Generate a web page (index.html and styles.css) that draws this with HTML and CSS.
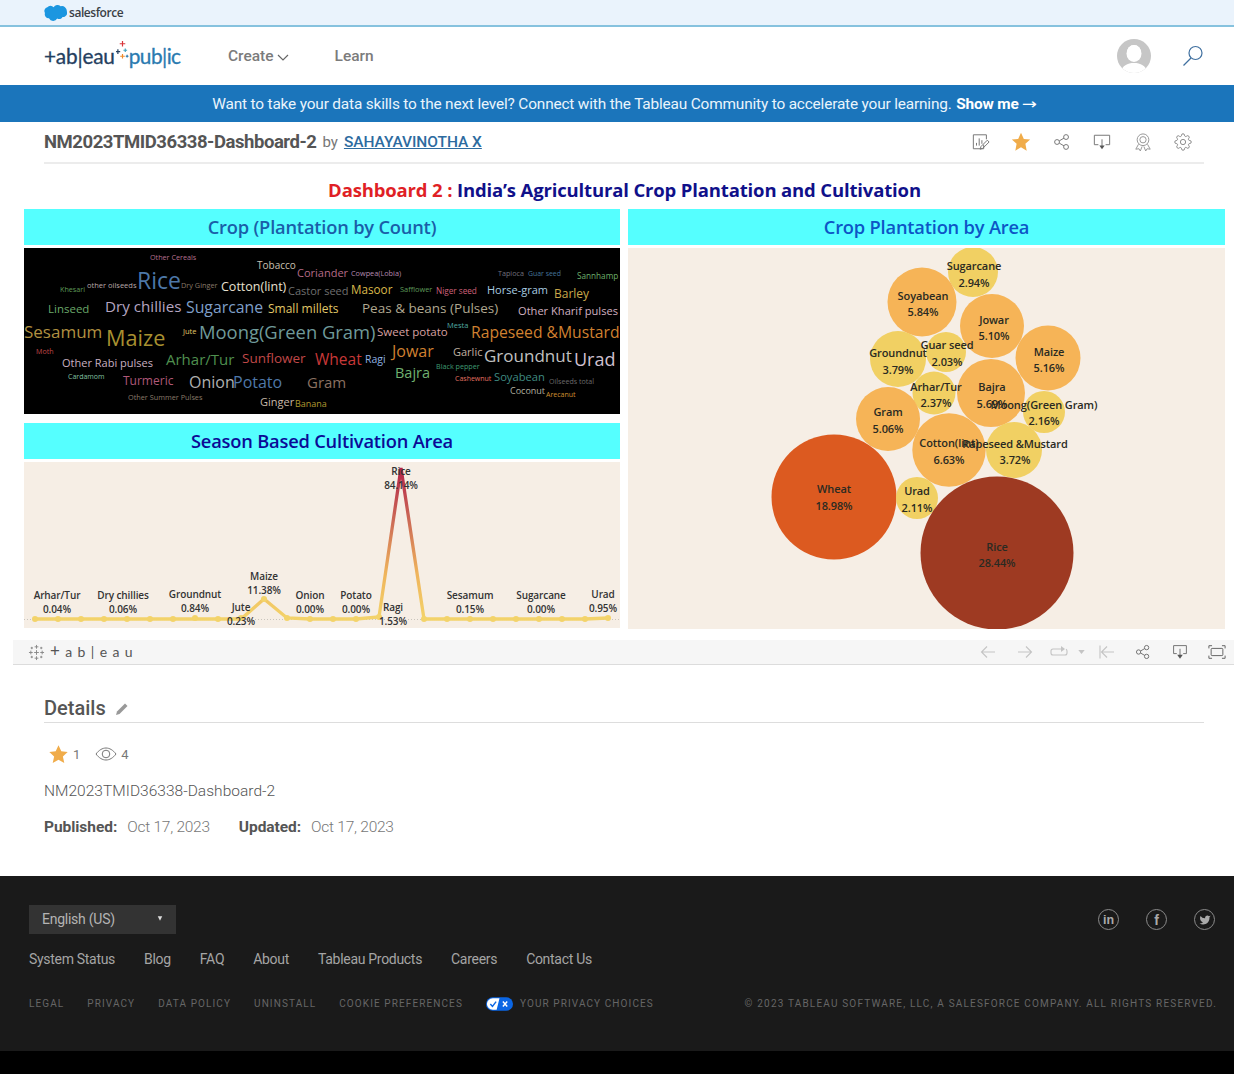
FILE: index.html
```html
<!DOCTYPE html>
<html lang="en">
<head>
<meta charset="utf-8">
<title>NM2023TMID36338-Dashboard-2</title>
<link rel="stylesheet" href="styles.css">
</head>
<body>
<div class="sf-bar">
  <svg class="sf-cloud" viewBox="0 0 24 17"><path d="M10 3a4.6 4.6 0 0 1 7.3-.9 5 5 0 0 1 6.500 5.100 4.300 4.300 0 0 1-4.400 6 4 4 0 0 1-5.600 1.600 4.800 4.800 0 0 1-8.600-.3A4.200 4.200 0 0 1 1 9a4 4 0 0 1 2.500-6A4 4 0 0 1 10 3z"/></svg>
  <span class="sf-name">salesforce</span>
</div>
<header class="nav">
  <div class="logo">
    <span class="logo-dark">+ab|eau</span>
    <svg class="logo-spark" viewBox="0 0 14 26"><path class="sp-red" d="M7 0v6M4 3h6"/><path class="sp-navy" d="M2 9v5M0 11.500h4.500"/><path class="sp-teal" d="M10 8v4M8 10h4"/><path class="sp-orange" d="M7 14v5M4.500 16.500h5"/><path class="sp-blue" d="M12 15v3M10.500 16.500h3"/></svg>
    <span class="logo-blue">pub|ic</span>
  </div>
  <nav class="nav-links">
    <a class="nav-link">Create <svg class="chev" viewBox="0 0 12 7"><path d="M1 1l5 5 5-5"/></svg></a>
    <a class="nav-link">Learn</a>
  </nav>
  <svg class="avatar" viewBox="0 0 34 34"><defs><clipPath id="avc"><circle cx="17" cy="17" r="17"/></clipPath></defs><circle cx="17" cy="17" r="17" fill="#c6c6c6"/><g clip-path="url(#avc)" fill="#fff"><ellipse cx="17" cy="14.500" rx="7.500" ry="8.500"/><path d="M3 36c1-9 7-12 14-12s13 3 14 12z"/></g><ellipse cx="17" cy="14" rx="7" ry="8" fill="#fff"/></svg>
  <svg class="search" viewBox="0 0 22 22"><circle cx="13.500" cy="8" r="6.500"/><path d="M9 13L1.500 20.500"/></svg>
</header>
<div class="banner">Want to take your data skills to the next level? Connect with the Tableau Community to accelerate your learning. <b class="banner-b">Show me <span class="banner-arrow">→</span></b></div>
<div class="title-row">
  <h1 class="viz-title">NM2023TMID36338-Dashboard-2</h1>
  <span class="by">by</span>
  <a class="author">SAHAYAVINOTHA X</a>
  <div class="actions">
    <svg class="act" viewBox="0 0 20 20"><path d="M13 13v4.500H1.500V2H16v5"/><path d="M5 14v-3M8 14V6M11 12V8"/><path d="M9 18l1-3 7-7 2 2-7 7z"/></svg>
    <svg class="act star" viewBox="0 0 24 24"><polygon points="12 2 15.100 8.600 22 9.300 16.800 14 18.200 21.500 12 17.600 5.800 21.500 7.200 14 2 9.300 8.900 8.600"/></svg>
    <svg class="act" viewBox="0 0 20 20"><circle cx="4.500" cy="10" r="2.700"/><circle cx="14.500" cy="4.500" r="2.700"/><circle cx="14.500" cy="15.500" r="2.700"/><path d="M7 8.700l5.200-3M7 11.300l5.200 3"/></svg>
    <svg class="act" viewBox="0 0 20 20"><path d="M6 13H1.500V2.500h17V13H14"/><path d="M10 7v9"/><path class="fill" d="M7 14h6l-3 4z"/></svg>
    <svg class="act act-light" viewBox="0 0 20 20"><circle cx="10" cy="7.500" r="6.500"/><circle cx="10" cy="7.500" r="3.500"/><path d="M5 12.500L2 18l3.500-.5L7 20l2-5M15 12.500l3 5.500-3.500-.5L13 20l-2-5"/></svg>
    <svg class="act" viewBox="0 0 24 24"><circle cx="12" cy="12" r="3.500"/><path d="M19.400 15a1.650 1.650 0 0 0 .33 1.820l.06.06a2 2 0 0 1 0 2.830 2 2 0 0 1-2.830 0l-.06-.06a1.650 1.650 0 0 0-1.820-.33 1.650 1.650 0 0 0-1 1.510V21a2 2 0 0 1-2 2 2 2 0 0 1-2-2v-.09A1.650 1.650 0 0 0 9 19.400a1.650 1.650 0 0 0-1.820.33l-.06.06a2 2 0 0 1-2.830 0 2 2 0 0 1 0-2.830l.06-.06a1.650 1.650 0 0 0 .33-1.820 1.650 1.650 0 0 0-1.510-1H3a2 2 0 0 1-2-2 2 2 0 0 1 2-2h.09A1.650 1.650 0 0 0 4.600 9a1.650 1.650 0 0 0-.33-1.820l-.06-.06a2 2 0 0 1 0-2.830 2 2 0 0 1 2.830 0l.06.06a1.650 1.650 0 0 0 1.820.33H9a1.650 1.650 0 0 0 1-1.510V3a2 2 0 0 1 2-2 2 2 0 0 1 2 2v.09a1.650 1.650 0 0 0 1 1.510 1.650 1.650 0 0 0 1.820-.33l.06-.06a2 2 0 0 1 2.830 0 2 2 0 0 1 0 2.830l-.06.06a1.650 1.650 0 0 0-.33 1.820V9a1.650 1.650 0 0 0 1.510 1H21a2 2 0 0 1 2 2 2 2 0 0 1-2 2h-.09a1.650 1.650 0 0 0-1.510 1z"/></svg>
  </div>
</div>
<main class="dash">
  <h2 class="dash-title"><span class="dash-red">Dashboard 2 :</span> India’s Agricultural Crop Plantation and Cultivation</h2>
  <div class="dash-grid">
    <div class="dash-col">
      <div class="panel-head head-a">Crop (Plantation by Count)</div>
      <svg class="cloud" viewBox="24 248 596 166">
        <rect x="24" y="248" width="596" height="166" fill="#000"/>
        <text x="150" y="260" font-size="7.200" fill="#b5708f">Other Cereals</text>
        <text x="257" y="269" font-size="10" fill="#c9c0b0">Tobacco</text>
        <text x="297" y="277" font-size="11" fill="#b56a86">Coriander</text>
        <text x="351" y="276" font-size="7.300" fill="#b58ab0">Cowpea(Lobia)</text>
        <text x="498" y="276" font-size="7.200" fill="#70707c">Tapioca</text>
        <text x="528" y="276" font-size="6.900" fill="#44749a">Guar seed</text>
        <text x="577" y="279" font-size="8.200" fill="#6db06a">Sannhamp</text>
        <text x="60" y="292" font-size="7.200" fill="#5e9a58">Khesari</text>
        <text x="87" y="288" font-size="7.500" fill="#b9a8a8">other oilseeds</text>
        <text x="137" y="289" font-size="23" fill="#4d78a8">Rice</text>
        <text x="181" y="288" font-size="7.300" fill="#8a7a6a">Dry Ginger</text>
        <text x="221" y="291" font-size="12.500" fill="#e8e0d0">Cotton(lint)</text>
        <text x="288" y="295" font-size="11" fill="#6f6f6f">Castor seed</text>
        <text x="351" y="294" font-size="11.700" fill="#d9b84a">Masoor</text>
        <text x="400" y="292" font-size="7.400" fill="#5e9a58">Safflower</text>
        <text x="436" y="294" font-size="8.200" fill="#d0607a">Niger seed</text>
        <text x="487" y="294" font-size="11" fill="#a8cce0">Horse-gram</text>
        <text x="554" y="298" font-size="12" fill="#c9a84a">Barley</text>
        <text x="48" y="313" font-size="11.500" fill="#6aa86a">Linseed</text>
        <text x="105" y="312" font-size="15.200" fill="#b5a5c0">Dry chillies</text>
        <text x="186" y="313" font-size="15.800" fill="#7f9fc8">Sugarcane</text>
        <text x="268" y="313" font-size="12" fill="#e0c868">Small millets</text>
        <text x="362" y="313" font-size="13.500" fill="#b0a890">Peas &amp; beans (Pulses)</text>
        <text x="518" y="315" font-size="11.100" fill="#d0b0c0">Other Kharif pulses</text>
        <text x="24" y="338" font-size="17" fill="#b09040">Sesamum</text>
        <text x="106" y="346" font-size="21.700" fill="#a89030">Maize</text>
        <text x="183" y="334" font-size="7.500" fill="#e0c868">Jute</text>
        <text x="199" y="339" font-size="18.400" fill="#6f9a9a">Moong(Green Gram)</text>
        <text x="377" y="336" font-size="11.500" fill="#d8a0a0">Sweet potato</text>
        <text x="447" y="328" font-size="7.500" fill="#4fa8a0">Mesta</text>
        <text x="471" y="338" font-size="15.700" fill="#d08030">Rapeseed &amp;Mustard</text>
        <text x="36" y="354" font-size="7.100" fill="#c04848">Moth</text>
        <text x="62" y="367" font-size="11" fill="#c8b0c0">Other Rabi pulses</text>
        <text x="166" y="365" font-size="15" fill="#4f8f4f">Arhar/Tur</text>
        <text x="242" y="363" font-size="13.500" fill="#c04848">Sunflower</text>
        <text x="315" y="365" font-size="15.500" fill="#c83838">Wheat</text>
        <text x="365" y="363" font-size="10.500" fill="#8fb0e0">Ragi</text>
        <text x="392" y="357" font-size="16" fill="#d08030">Jowar</text>
        <text x="453" y="356" font-size="11" fill="#c0b0a0">Garlic</text>
        <text x="484" y="362" font-size="17" fill="#c0c0c0">Groundnut</text>
        <text x="574" y="366" font-size="18" fill="#d0c0d0">Urad</text>
        <text x="68" y="379" font-size="7" fill="#80c0a0">Cardamom</text>
        <text x="123" y="385" font-size="12" fill="#b05878">Turmeric</text>
        <text x="189" y="388" font-size="16" fill="#b0b0b0">Onion</text>
        <text x="233" y="388" font-size="16" fill="#4f78a8">Potato</text>
        <text x="307" y="388" font-size="15" fill="#8a7060">Gram</text>
        <text x="395" y="378" font-size="14.500" fill="#6fb06f">Bajra</text>
        <text x="436" y="369" font-size="7.200" fill="#3f9a70">Black pepper</text>
        <text x="455" y="381" font-size="7" fill="#e07060">Cashewnut</text>
        <text x="494" y="381" font-size="11.200" fill="#3f8a80">Soyabean</text>
        <text x="549" y="384" font-size="7.100" fill="#6a6a6a">Oilseeds total</text>
        <text x="510" y="394" font-size="9" fill="#b0b0a0">Coconut</text>
        <text x="546" y="397" font-size="7" fill="#d09030">Arecanut</text>
        <text x="128" y="400" font-size="7.300" fill="#8a7a6a">Other Summer Pulses</text>
        <text x="260" y="406" font-size="11" fill="#c8b8a8">Ginger</text>
        <text x="295" y="407" font-size="9" fill="#b09a30">Banana</text>
      </svg>
      <div class="panel-head head-b">Season Based Cultivation Area</div>
      <svg class="line" viewBox="24 462 596 166">
        <defs><linearGradient id="lg" gradientUnits="userSpaceOnUse" x1="0" y1="619" x2="0" y2="468"><stop offset="0" stop-color="#f3d36a"/><stop offset=".3" stop-color="#efb45c"/><stop offset=".65" stop-color="#cc6a55"/><stop offset="1" stop-color="#b3234a"/></linearGradient></defs>
        <path class="zero" d="M24 619.500H620"/>
        <path class="trend" d="M35 619H218L241 619L264 599L287 618L310 619H356L379 617L401 468L424 619H585L608 618"/>
        <g class="pts">
          <circle cx="35" cy="619" r="3"/><circle cx="58" cy="619" r="3"/><circle cx="81" cy="619" r="3"/><circle cx="104" cy="619" r="3"/><circle cx="127" cy="619" r="3"/><circle cx="150" cy="619" r="3"/><circle cx="173" cy="619" r="3"/><circle cx="195" cy="618" r="3"/><circle cx="218" cy="619" r="3"/><circle cx="241" cy="618" r="3"/><circle cx="264" cy="599" r="3"/><circle cx="287" cy="618" r="3"/><circle cx="310" cy="619" r="3"/><circle cx="333" cy="619" r="3"/><circle cx="356" cy="619" r="3"/><circle cx="379" cy="617" r="3"/><circle cx="424" cy="619" r="3"/><circle cx="447" cy="619" r="3"/><circle cx="470" cy="619" r="3"/><circle cx="493" cy="619" r="3"/><circle cx="516" cy="619" r="3"/><circle cx="539" cy="619" r="3"/><circle cx="562" cy="619" r="3"/><circle cx="585" cy="619" r="3"/><circle cx="608" cy="618" r="3"/>
        </g>
        <g class="labels">
          <text x="57" y="599">Arhar/Tur</text><text x="57" y="613">0.04%</text>
          <text x="123" y="599">Dry chillies</text><text x="123" y="613">0.06%</text>
          <text x="195" y="598">Groundnut</text><text x="195" y="612">0.84%</text>
          <text x="264" y="580">Maize</text><text x="264" y="594">11.38%</text>
          <text x="241" y="611">Jute</text><text x="241" y="625">0.23%</text>
          <text x="310" y="599">Onion</text><text x="310" y="613">0.00%</text>
          <text x="356" y="599">Potato</text><text x="356" y="613">0.00%</text>
          <text x="393" y="611">Ragi</text><text x="393" y="625">1.53%</text>
          <text x="401" y="475">Rice</text><text x="401" y="489">84.14%</text>
          <text x="470" y="599">Sesamum</text><text x="470" y="613">0.15%</text>
          <text x="541" y="599">Sugarcane</text><text x="541" y="613">0.00%</text>
          <text x="603" y="598">Urad</text><text x="603" y="612">0.95%</text>
        </g>
      </svg>
    </div>
    <div class="dash-col dash-col-r">
      <div class="panel-head head-a2">Crop Plantation by Area</div>
      <svg class="bubbles" viewBox="628 248 597 381">
        <rect x="628" y="248" width="597" height="381" fill="#f6eee5"/>
        <circle cx="973" cy="272" r="25" fill="#f1d063"/>
        <circle cx="922" cy="302" r="34.500" fill="#f6b457"/>
        <circle cx="992" cy="326" r="32" fill="#f6b457"/>
        <circle cx="1048" cy="358" r="32.500" fill="#f6b457"/>
        <circle cx="898" cy="359" r="28" fill="#f1d063"/>
        <circle cx="946" cy="352" r="20" fill="#f1d063"/>
        <circle cx="934" cy="393" r="21.500" fill="#f1d063"/>
        <circle cx="991" cy="393" r="34" fill="#f6b457"/>
        <circle cx="1044" cy="412" r="21" fill="#f1d063"/>
        <circle cx="888" cy="419" r="32" fill="#f6b457"/>
        <circle cx="949" cy="450" r="36.700" fill="#f6b457"/>
        <circle cx="1014" cy="450" r="28" fill="#f1d063"/>
        <circle cx="834" cy="497" r="62.500" fill="#dc5a20"/>
        <circle cx="917" cy="498" r="21" fill="#f1d063"/>
        <circle cx="997" cy="553" r="76.500" fill="#9e3a22"/>
        <g class="blabels">
          <text x="974" y="270">Sugarcane</text><text x="974" y="287">2.94%</text>
          <text x="923" y="300">Soyabean</text><text x="923" y="316">5.84%</text>
          <text x="994" y="324">Jowar</text><text x="994" y="340">5.10%</text>
          <text x="1049" y="356">Maize</text><text x="1049" y="372">5.16%</text>
          <text x="898" y="357">Groundnut</text><text x="898" y="374">3.79%</text>
          <text x="947" y="349">Guar seed</text><text x="947" y="366">2.03%</text>
          <text x="936" y="391">Arhar/Tur</text><text x="936" y="407">2.37%</text>
          <text x="992" y="391">Bajra</text><text x="992" y="408">5.69%</text>
          <text x="1044" y="409">Moong(Green Gram)</text><text x="1044" y="425">2.16%</text>
          <text x="888" y="416">Gram</text><text x="888" y="433">5.06%</text>
          <text x="949" y="447">Cotton(lint)</text><text x="949" y="464">6.63%</text>
          <text x="1015" y="448">Rapeseed &amp;Mustard</text><text x="1015" y="464">3.72%</text>
          <text x="917" y="495">Urad</text><text x="917" y="512">2.11%</text>
          <text x="834" y="493">Wheat</text><text x="834" y="510">18.98%</text>
          <text x="997" y="551">Rice</text><text x="997" y="567">28.44%</text>
        </g>
      </svg>
    </div>
  </div>
</main>
<div class="viz-bar">
  <div class="tb-logo">
    <svg class="tb-mark" viewBox="0 0 18 18"><path d="M9 1v4M7 3h4M9 13v4M7 15h4M1 9h4M3 7v4M13 9h4M15 7v4M4 3v2.500M2.800 4.200h2.500M14 3v2.500M12.800 4.200h2.500M4 12.500V15M2.800 13.800h2.500M14 12.500V15M12.800 13.800h2.500M9 6.500v5M6.500 9h5"/></svg>
    <span class="tb-text"><span class="tb-plus">+</span> a b | e a u</span>
  </div>
  <div class="tb-icons">
    <svg class="tb-i tb-off" viewBox="0 0 16 14"><path d="M15 7H1.500M7 1.500L1.500 7 7 12.500"/></svg>
    <svg class="tb-i tb-off" viewBox="0 0 16 14"><path d="M1 7h13.500M9 1.500L14.500 7 9 12.500"/></svg>
    <svg class="tb-i tb-w tb-off" viewBox="0 0 18 14"><path d="M11 4H3a2 2 0 0 0-2 2v2a2 2 0 0 0 2 2h12a2 2 0 0 0 2-2V6a2 2 0 0 0-1-1.800"/><path class="tb-fill" d="M11 1v6l4-3z"/></svg>
    <svg class="tb-caret" viewBox="0 0 8 5"><path d="M0 0h8L4 5z"/></svg>
    <svg class="tb-i tb-off" viewBox="0 0 16 14"><path d="M1 .500v13M15 7H3M8 1.500L2.500 7 8 12.500"/></svg>
    <svg class="tb-i tb-big" viewBox="0 0 20 20"><circle cx="4.500" cy="10" r="2.700"/><circle cx="14.500" cy="4.500" r="2.700"/><circle cx="14.500" cy="15.500" r="2.700"/><path d="M7 8.700l5.200-3M7 11.300l5.200 3"/></svg>
    <svg class="tb-i tb-big" viewBox="0 0 20 20"><path d="M6 12H2V2h16v10h-4"/><path d="M10 6v9"/><path class="tb-fill" d="M6.500 13.500h7L10 18.500z"/></svg>
    <svg class="tb-i tb-big" viewBox="0 0 20 16"><rect x="3.500" y="4" width="13" height="8" rx="1"/><path d="M1 4V1h3.500M15.500 1H19v3M19 12v3h-3.500M4.500 15H1v-3"/></svg>
  </div>
</div>
<section class="details">
  <h3 class="details-head">Details <svg class="pencil" viewBox="0 0 14 14"><path d="M1 13l1-3.500L10 1.500 12.500 4 4.500 12z"/></svg></h3>
  <div class="stats">
    <svg class="d-star" viewBox="0 0 24 24"><polygon points="12 1.500 15.200 8.400 22.500 9.200 17 14.200 18.600 21.800 12 18 5.400 21.800 7 14.200 1.500 9.200 8.800 8.400"/></svg>
    <span class="stat-n">1</span>
    <svg class="eye" viewBox="0 0 22 14"><path d="M1 7c3-4 6.500-6 10-6s7 2 10 6c-3 4-6.500 6-10 6S4 11 1 7z"/><circle cx="11" cy="7" r="3.800"/></svg>
    <span class="stat-n">4</span>
  </div>
  <p class="d-name">NM2023TMID36338-Dashboard-2</p>
  <p class="dates"><b class="d-lab">Published:</b><span class="d-val">Oct 17, 2023</span><b class="d-lab">Updated:</b><span class="d-val">Oct 17, 2023</span></p>
</section>
<footer class="footer">
  <div class="foot-top">
    <div class="lang"><span>English (US)</span><svg class="lang-caret" viewBox="0 0 8 6"><path d="M1 0h6L4 6z"/></svg></div>
    <div class="social">
      <span class="soc soc-in">in</span>
      <span class="soc soc-f">f</span>
      <span class="soc"><svg class="bird" viewBox="0 0 24 24"><path d="M23 3a10.900 10.900 0 0 1-3 1.530 4.480 4.480 0 0 0-7.860 3v1A10.660 10.660 0 0 1 3 4s-4 9 5 13a11.640 11.640 0 0 1-7 2c9 5 20 0 20-11.500a4.500 4.500 0 0 0-.08-.83A7.720 7.720 0 0 0 23 3z"/></svg></span>
    </div>
  </div>
  <div class="foot-links">
    <a>System Status</a><a>Blog</a><a>FAQ</a><a>About</a><a>Tableau Products</a><a>Careers</a><a>Contact Us</a>
  </div>
  <div class="legal">
    <a>LEGAL</a><a>PRIVACY</a><a>DATA POLICY</a><a>UNINSTALL</a><a>COOKIE PREFERENCES</a>
    <a class="choices"><svg class="toggle" viewBox="0 0 28 14"><rect width="28" height="14" rx="7" fill="#0b66e4"/><path d="M7 1h7l-3 12H7a6 6 0 0 1 0-12z" fill="#fff"/><path d="M4.500 7l2.200 2.500L10.500 4.500" fill="none" stroke="#0b66e4" stroke-width="1.500"/><path d="M17.500 4.500l4.500 5M22 4.500l-4.500 5" stroke="#fff" stroke-width="1.500"/></svg>YOUR PRIVACY CHOICES</a>
    <span class="copy">© 2023 TABLEAU SOFTWARE, LLC, A SALESFORCE COMPANY. ALL RIGHTS RESERVED.</span>
  </div>
</footer>
<div class="foot-black"></div>
</body>
</html>
```

FILE: styles.css
```css
* { box-sizing: border-box; }
html, body { margin: 0; padding: 0; }
body { font-family: Roboto, "Liberation Sans", sans-serif; color: #555; background: #fff; overflow-x: hidden; }
a { color: inherit; text-decoration: none; }
h1, h2, h3, p { margin: 0; }

.sf-bar { height: 27px; background: #eaf3fc; border-bottom: 2px solid #86c2de; padding-left: 44px; display: flex; align-items: center; }
.sf-cloud { width: 23px; height: 17px; fill: #1b96e0; }
.sf-name { margin-left: 2px; font-size: 12px; font-weight: 600; color: #3a3f46; font-family: "Open Sans", sans-serif; letter-spacing: -.45px; }

.nav { height: 58px; display: flex; align-items: center; padding-left: 44px; padding-right: 30px; }
.logo { width: 137px; display: flex; align-items: center; font-family: Lato, sans-serif; font-size: 20.800px; line-height: 1; letter-spacing: -.2px; -webkit-text-stroke: .3px currentColor; }
.logo-dark { color: #24405f; }
.logo-blue { color: #2a7ab0; letter-spacing: -.55px; }
.logo-spark { width: 13px; height: 24px; flex: none; fill: none; stroke-width: 1.300; margin: -6px 0 0 1px; }
.sp-red { stroke: #d8343a; } .sp-navy { stroke: #24405f; } .sp-teal { stroke: #43a4c0; } .sp-orange { stroke: #ee8a2c; } .sp-blue { stroke: #2a7ab0; }
.nav-links { display: flex; gap: 46px; margin-left: 47px; font-size: 15.500px; font-weight: 500; color: #7b7b7b; }
.nav-link { display: flex; align-items: center; gap: 3px; }
.chev { width: 12px; height: 7px; fill: none; stroke: #666; stroke-width: 1.200; margin-top: 3px; }
.avatar { width: 34px; height: 34px; margin-left: auto; }
.search { width: 22px; height: 22px; margin-left: 31px; fill: none; stroke: #3f6f9f; stroke-width: 1.200; }

.banner { height: 37px; background: #1b75bb; color: #eaf4fb; font-size: 15.400px; display: flex; align-items: center; justify-content: center; white-space: pre-wrap; padding-left: 14px; letter-spacing: -.17px; }
.banner-b { font-weight: 700; color: #fff; margin-left: 1px; }
.banner-arrow { font-family: "DejaVu Sans", sans-serif; font-weight: 400; font-size: 15px; display: inline-block; transform: scaleX(1.200); margin-left: 1px; }

.title-row { height: 42px; margin: 0 30px 0 44px; border-bottom: 2px solid #ececec; display: flex; align-items: center; }
.viz-title { font-size: 18.500px; font-weight: 700; color: #555; letter-spacing: -.45px; }
.by { font-size: 15px; color: #777; margin-left: 6px; }
.author { margin-left: 6px; font-size: 15.500px; font-weight: 500; color: #2d6b9f; text-decoration: underline; letter-spacing: -.05px; }
.actions { margin-left: auto; display: flex; gap: 22.400px; margin-right: 12px; }
.act { width: 18px; height: 18px; fill: none; stroke: #777; stroke-width: 1.100; }
.act.star { width: 22px; height: 22px; margin: -2px; fill: #f0ac4a; stroke: none; }
.act-light { stroke: #999; }
.act .fill { fill: #555; stroke: none; }

.dash { height: 476px; padding-left: 24px; }
.dash-title { height: 45px; padding: 15px 0 0 0; font-family: "Open Sans", sans-serif; font-size: 18.500px; font-weight: 700; line-height: 22px; text-align: center; width: 1201px; color: #10108a; letter-spacing: -.15px; }
.dash-red { color: #e01f26; }
.dash-grid { display: flex; gap: 8px; }
.dash-col { width: 596px; display: flex; flex-direction: column; }
.dash-col-r { width: 597px; }
.panel-head { height: 36px; padding-bottom: 2px; background: #55ffff; display: flex; align-items: center; justify-content: center; font-family: "Open Sans", sans-serif; font-size: 18.300px; font-weight: 600; letter-spacing: -.2px; }
.head-a { color: #1a5ea8; }
.head-a2 { color: #0d56c6; }
.head-b { color: #0b0b96; margin-top: 9px; padding-bottom: 1px; }
.cloud, .line, .bubbles { display: block; margin-top: 3px; width: 100%; font-family: "Open Sans", sans-serif; }
.cloud { height: 166px; }
.line { height: 166px; background: #f6eee5; }
.bubbles { height: 381px; }
.zero { stroke: #c9c4bc; stroke-width: 1; stroke-dasharray: 1 2; }
.trend { fill: none; stroke: url(#lg); stroke-width: 3.300; stroke-linejoin: miter; }
.pts circle { fill: #f3d36a; }
.labels text { font-size: 10px; font-weight: 600; text-anchor: middle; fill: #333; letter-spacing: -.1px; }
.blabels text { font-size: 11px; font-weight: 600; text-anchor: middle; fill: #2a2a22; letter-spacing: -.1px; }

.viz-bar { height: 25px; margin: 0 0 0 13px; background: #f6f6f6; border-bottom: 1px solid #dcdcdc; display: flex; align-items: center; padding: 0 8px 0 15px; }
.tb-logo { display: flex; align-items: center; gap: 5px; }
.tb-mark { width: 17px; height: 17px; fill: none; stroke: #888; stroke-width: 1; }
.tb-text { font-family: Lato, sans-serif; font-size: 14px; line-height: 16px; color: #555; letter-spacing: .9px; white-space: nowrap; margin-top: -2px; }
.tb-plus { font-size: 17px; line-height: 1; }
.tb-icons { margin-left: auto; display: flex; align-items: center; }
.tb-i { width: 16px; height: 14px; margin-left: 21px; fill: none; stroke: #666; stroke-width: 1.100; flex: none; }
.tb-big { width: 18px; height: 16px; margin-left: 19px; }
.tb-off { stroke: #c4c4c4; }
.tb-w { width: 18px; margin-left: 17px; }
.tb-fill { fill: #555; stroke: none; }
.tb-off .tb-fill { fill: #c4c4c4; }
.tb-caret { width: 7px; height: 4px; margin-left: 10px; fill: #c4c4c4; }
.tb-icons .tb-caret + .tb-i { margin-left: 14px; }

.details { height: 211px; padding: 0 30px 0 44px; }
.details-head { height: 58px; padding-top: 28px; font-size: 20px; line-height: 26px; font-weight: 500; color: #555; border-bottom: 1px solid #ddd; display: flex; align-items: center; gap: 9px; }
.pencil { width: 14px; height: 14px; fill: #999; margin-top: 3px; }
.stats { display: flex; align-items: center; margin-top: 20px; padding-left: 4px; height: 22px; color: #777; font-size: 13px; }
.d-star { width: 21px; height: 21px; fill: #f0ac4a; }
.stat-n { margin-left: 4px; }
.eye { width: 22px; height: 14px; fill: none; stroke: #777; stroke-width: 1; margin-left: 15px; }
.d-name { margin-top: 16px; font-size: 15.500px; line-height: 20px; font-weight: 300; color: #555; letter-spacing: .03px; }
.dates { margin-top: 16px; font-size: 15.500px; line-height: 20px; display: flex; color: #777; font-weight: 300; }
.d-lab { font-weight: 700; color: #555; letter-spacing: -.05px; margin-right: 10px; }
.d-val { margin-right: 29px; letter-spacing: -.25px; }

.footer { height: 175px; background: #1a1a1a; padding: 29px 17px 0 29px; color: #aaa; }
.foot-top { display: flex; align-items: flex-start; justify-content: space-between; }
.lang { width: 147px; height: 29px; background: #333; display: flex; align-items: center; justify-content: space-between; padding: 0 13px 2px; font-size: 14px; color: #b4b4b4; letter-spacing: -.25px; }
.lang-caret { width: 6px; height: 5px; fill: #ddd; }
.social { display: flex; gap: 27px; padding-right: 2px; margin-top: 4px; }
.soc { width: 21px; height: 21px; border: 1.500px solid #8a8a8a; border-radius: 50%; display: flex; align-items: center; justify-content: center; font-family: "Liberation Sans", sans-serif; font-weight: 700; font-size: 14px; color: #aaa; }
.soc-in { font-size: 12.500px; }
.bird { width: 12px; height: 12px; fill: #aaa; }
.foot-links { display: flex; gap: 29px; margin-top: 16px; font-size: 14px; line-height: 19px; color: #a5a5a5; letter-spacing: -.3px; }
.legal { display: flex; align-items: center; margin-top: 28px; gap: 23px; font-size: 10px; line-height: 14px; letter-spacing: 1.100px; color: #666; white-space: nowrap; }
.choices { display: flex; align-items: center; gap: 7px; }
.toggle { width: 27px; height: 14px; }
.copy { margin-left: auto; letter-spacing: 1.180px; }
.foot-black { height: 23px; background: #000; }
```
